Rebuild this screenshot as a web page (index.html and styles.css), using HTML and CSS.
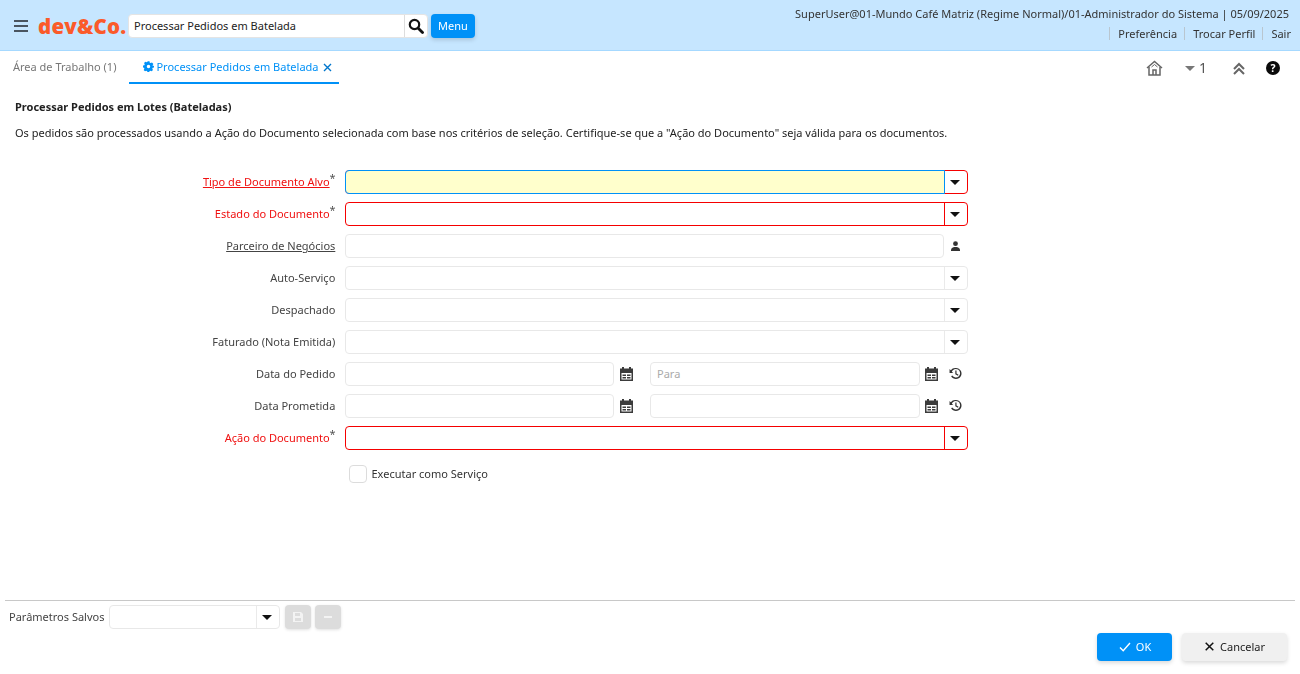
FILE: index.html
```html
<!DOCTYPE html>
<html lang="pt">
<head>
<meta charset="utf-8">
<title>Processar Pedidos em Batelada</title>
<link rel="stylesheet" href="styles.css">
</head>
<body>
<svg class="defs" width="0" height="0" aria-hidden="true">
  <symbol id="caret" viewBox="0 0 10 5"><path d="M0 0h10L5 5z"/></symbol>
  <symbol id="cal" viewBox="0 0 13 14"><path fill-rule="evenodd" d="M2 0h2v1.500h5V0h2v1.500h2V14H0V1.500h2zM1.500 6v6.500h10V6zM2.500 7.500h3.500v1.500H2.500zM7 7.500h3.500v1.500H7zM2.500 10h3.500v1.500H2.500zM7 10h3.500v1.500H7z"/></symbol>
  <symbol id="hist" viewBox="0 0 14 14"><path d="M7.500 1A6 6 0 1 1 2.300 10l1.200-.8A4.600 4.600 0 1 0 3 5.200l1.600 1.300H.6V2.200l1.300 1.400A6 6 0 0 1 7.500 1z"/><path d="M6.800 3.800h1.300v3.200l2.200 1.400-.7 1L6.800 7.700z"/></symbol>
</svg>

<header class="topbar">
  <div class="top-left">
    <svg class="burger" width="14" height="12" viewBox="0 0 14 12"><path d="M0 0h14v2H0zM0 5h14v2H0zM0 10h14v2H0z"/></svg>
    <span class="logo">dev&amp;Co.</span>
    <div class="search">
      <span class="search-text">Processar Pedidos em Batelada</span>
      <span class="search-btn"><svg width="16" height="16" viewBox="0 0 16 16"><circle cx="6.500" cy="6.500" r="4.700" fill="none" stroke="#111" stroke-width="2.200"/><path d="M10 10l4.500 4.500" stroke="#111" stroke-width="2.800" stroke-linecap="round"/></svg></span>
    </div>
    <button class="menu-btn">Menu</button>
  </div>
  <div class="top-right">
    <div class="user">SuperUser@01-Mundo Café Matriz (Regime Normal)/01-Administrador do Sistema | 05/09/2025</div>
    <nav class="links"><a>Preferência</a><a>Trocar Perfil</a><a>Sair</a></nav>
  </div>
</header>

<div class="tabbar">
  <div class="tabs">
    <span class="tab">Área de Trabalho (1)</span>
    <span class="tab active">
      <svg width="11" height="11" viewBox="0 0 12 12"><path fill="#0091f7" fill-rule="evenodd" d="M4.900.3h2.200l.3 1.500 1 .5L9.800 1.700l1.500 1.600-.8 1.300.4 1L12 5v2.100l-1.500.3-.4 1 .8 1.300-1.500 1.600-1.400-.7-1 .5-.3 1.400H4.900l-.3-1.400-1-.5-1.400.7L.7 9.700l.8-1.300-.4-1L0 7.100V5l1.500-.4.400-1-.8-1.300 1.500-1.600 1.400.6 1-.5zM6 4.200a1.900 1.900 0 1 0 0 3.800 1.900 1.900 0 0 0 0-3.800z"/></svg>
      Processar Pedidos em Batelada
      <svg class="tab-x" width="9" height="9" viewBox="0 0 9 9"><path d="M1 1l7 7M8 1L1 8" stroke="#0076cc" stroke-width="1.400"/></svg>
    </span>
  </div>
  <div class="tools">
    <svg width="17" height="16" viewBox="0 0 17 16" fill="none" stroke="#666" stroke-width="1.500"><path d="M1 8l7.500-6.500L16 8"/><path d="M3 7v8h11V7M7 15v-5h3v5"/><path d="M5.500 7l3-2.500 3 2.500" stroke-width="1"/></svg>
    <span class="tool-count"><svg width="10" height="5"><use href="#caret" fill="#777"/></svg>1</span>
    <svg width="14" height="13" viewBox="0 0 14 13" fill="none" stroke="#666" stroke-width="2"><path d="M2 7l5-5 5 5M2 12l5-5 5 5"/></svg>
    <svg class="help" width="14" height="14" viewBox="0 0 14 14"><circle cx="7" cy="7" r="7" fill="#0a0a0a"/><text x="7" y="10.700" text-anchor="middle" class="help-q">?</text></svg>
  </div>
</div>

<main class="content">
  <h1 class="title">Processar Pedidos em Lotes (Bateladas)</h1>
  <p class="desc">Os pedidos são processados usando a Ação do Documento selecionada com base nos critérios de seleção. Certifique-se que a "Ação do Documento" seja válida para os documentos.</p>

  <form class="form">
    <label class="lbl req"><u>Tipo de Documento Alvo</u><sup>*</sup></label>
    <div class="combo err focus"><span class="field"></span><span class="drop"><svg width="10" height="5"><use href="#caret"/></svg></span></div>

    <label class="lbl req">Estado do Documento<sup>*</sup></label>
    <div class="combo err"><span class="field"></span><span class="drop"><svg width="10" height="5"><use href="#caret"/></svg></span></div>

    <label class="lbl"><u>Parceiro de Negócios</u></label>
    <div class="search-field"><span class="box"></span><svg class="person" width="9" height="10" viewBox="0 0 9 10"><circle cx="4.500" cy="2.700" r="2.400"/><path d="M0 10V8.500Q.3 6.500 3 6h3q2.700.5 3 2.500V10z"/></svg></div>

    <label class="lbl">Auto-Serviço</label>
    <div class="combo"><span class="field"></span><span class="drop"><svg width="10" height="5"><use href="#caret"/></svg></span></div>

    <label class="lbl">Despachado</label>
    <div class="combo"><span class="field"></span><span class="drop"><svg width="10" height="5"><use href="#caret"/></svg></span></div>

    <label class="lbl">Faturado (Nota Emitida)</label>
    <div class="combo"><span class="field"></span><span class="drop"><svg width="10" height="5"><use href="#caret"/></svg></span></div>

    <label class="lbl">Data do Pedido</label>
    <div class="dates">
      <span class="box"></span>
      <svg class="ico-cal" width="13" height="14"><use href="#cal"/></svg>
      <span class="box ph">Para</span>
      <svg class="ico-cal second" width="13" height="14"><use href="#cal"/></svg>
      <svg class="ico-hist" width="13" height="13"><use href="#hist"/></svg>
    </div>

    <label class="lbl">Data Prometida</label>
    <div class="dates">
      <span class="box"></span>
      <svg class="ico-cal" width="13" height="14"><use href="#cal"/></svg>
      <span class="box"></span>
      <svg class="ico-cal second" width="13" height="14"><use href="#cal"/></svg>
      <svg class="ico-hist" width="13" height="13"><use href="#hist"/></svg>
    </div>

    <label class="lbl req">Ação do Documento<sup>*</sup></label>
    <div class="combo err"><span class="field"></span><span class="drop"><svg width="10" height="5"><use href="#caret"/></svg></span></div>

    <span></span>
    <div class="check"><span class="checkbox"></span>Executar como Serviço</div>
  </form>
</main>

<footer class="footer">
  <div class="saved">
    <span class="saved-lbl">Parâmetros Salvos</span>
    <div class="combo small"><span class="field"></span><span class="drop"><svg width="10" height="5"><use href="#caret"/></svg></span></div>
    <span class="grey-btn"><svg class="faint" width="10" height="10" viewBox="0 0 10 10"><path fill-rule="evenodd" d="M0 0h8l2 2v8H0zM2 1v3h5V1zM2 6v3h6V6z"/></svg></span>
    <span class="grey-btn"><svg class="faint" width="8" height="2"><path d="M0 0h8v2H0z"/></svg></span>
  </div>
  <div class="actions">
    <button class="btn ok"><svg width="12" height="10" viewBox="0 0 12 10" fill="none" stroke="#fff" stroke-width="1.400"><path d="M1 5.500L4.200 8.700 11 1"/></svg>OK</button>
    <button class="btn cancel"><svg width="9" height="9" viewBox="0 0 9 9" fill="none" stroke="#111" stroke-width="1.500"><path d="M.7.7l7.600 7.600M8.300.7L.7 8.300"/></svg>Cancelar</button>
  </div>
</footer>
</body>
</html>
```
FILE: styles.css
```css
* { box-sizing: border-box; }
html { height: 100%; background: #fff; }
body {
  height: 100%;
  margin: 0;
  color: #333;
  font: 11px/16px "Noto Sans", sans-serif;
  display: flex;
  flex-direction: column;
  overflow: hidden;
  will-change: opacity;
}
.defs { position: absolute; }

.topbar {
  height: 51px;
  flex: none;
  background: #c6e6ff;
  border-bottom: 1px solid #a6d9ff;
  display: flex;
  justify-content: space-between;
  padding: 0 10px 0 14px;
}
.top-left { display: flex; align-items: center; padding-top: 2px; height: 50px; }
.burger { fill: #4a5560; flex: none; }
.logo {
  margin-left: 10px;
  width: 90px;
  font: 800 20.500px/24px "Open Sans", "Noto Sans", sans-serif;
  color: #fb5a2a;
  letter-spacing: .2px;
  white-space: nowrap;
}
.search {
  width: 300px;
  height: 24px;
  background: #fff;
  border: 1px solid #e4e4e4;
  border-radius: 4px;
  display: flex;
  align-items: center;
  color: #222;
}
.search-text { flex: 1; padding-left: 5px; }
.search-btn {
  width: 23px;
  height: 22px;
  border-left: 1px solid #ddd;
  display: flex;
  align-items: center;
  justify-content: center;
}
.menu-btn {
  margin-left: 3px;
  width: 44px;
  height: 24px;
  padding: 0 0 1px;
  border: 0;
  border-radius: 4px;
  background: #0091f7;
  color: #fff;
  font: 11px "Noto Sans", sans-serif;
  box-shadow: 0 2px 4px rgba(0,0,0,.15);
}
.top-right { text-align: right; padding-top: 6px; color: #333; }
.user { height: 16px; margin-right: 1px; white-space: nowrap; }
.links { display: flex; justify-content: flex-end; margin: 5px -1px 0 0; height: 13px; line-height: 13px; }
.links a { border-left: 1px solid #b9c6d0; padding: 0 0 0 8px; margin-left: 7px; }

.tabbar {
  height: 33px;
  flex: none;
  display: flex;
  justify-content: space-between;
  padding-left: 13px;
}
.tabs { display: flex; }
.tab { color: #777; line-height: 32px; white-space: nowrap; }
.tab.active {
  margin-left: 13px;
  width: 210px;
  height: 33px;
  padding-left: 14px;
  color: #0091f7;
  border-bottom: 2px solid #0091f7;
  display: flex;
  align-items: center;
  gap: 2px;
}
.tab-x { margin-left: 2px; margin-top: 2px; }
.tools { display: flex; align-items: center; padding-right: 20px; padding-top: 1px; }
.tool-count {
  margin-left: 22px;
  width: 47px;
  font-size: 14px;
  color: #555;
  display: flex;
  align-items: center;
  gap: 4px;
}
.help { margin-left: 20px; }
.help-q { fill: #fff; font: 700 10.500px "Noto Sans", sans-serif; }

.content { flex: 1; padding: 15px 15px 0; min-height: 0; }
.title { margin: 0; font: 700 11px/16px "Noto Sans", sans-serif; color: #222; }
.desc { margin: 10px 0 0; color: #222; white-space: nowrap; }

.form {
  margin-top: 29px;
  display: grid;
  grid-template-columns: 321px 623px;
  grid-auto-rows: 24px;
  column-gap: 9px;
  row-gap: 8px;
}
.lbl {
  text-align: right;
  line-height: 24px;
  padding-right: .7px;
  color: #444;
  position: relative;
  white-space: nowrap;
}
.lbl.req { color: #f01010; padding-right: 6.400px; }
.lbl sup { color: #555; font-size: 11px; line-height: 0; position: absolute; top: 8px; vertical-align: baseline; }

.combo { display: flex; height: 24px; border: 1px solid #e8e8e8; border-radius: 4px; background: #fff; }
.combo .field { flex: 1; border-radius: 3px 0 0 3px; }
.combo .drop {
  width: 23px;
  padding-right: 2px;
  border-left: 1px solid #eaeaea;
  display: flex;
  align-items: center;
  justify-content: center;
  fill: #111;
}
.combo.err { border-color: #f50000; }
.combo.err .drop { border-left-color: #f50000; }
.combo.focus .field { background: #ffffcc; margin: -1px 0 -1px -1px; border: 1px solid #0091f7; border-radius: 4px 0 0 4px; }
.combo.focus .drop { border-left: 0; width: 22px; }

.box { height: 24px; border: 1px solid #e8e8e8; border-radius: 4px; background: #fff; display: block; }
.ph { color: #aaa; padding-left: 6px; line-height: 22px; }
.search-field { display: flex; align-items: center; }
.search-field .box { width: 599px; }
.person { fill: #333; margin-left: 7px; margin-top: -1px; }

.dates { display: grid; grid-template-columns: 269px 36px 270px 26px 16px; align-items: center; width: 617px; }
.ico-cal { fill: #3b3b3b; margin-left: 6px; margin-top: -1px; }
.ico-cal.second { margin-left: 5px; }
.ico-hist { fill: #333; margin-top: -1px; margin-left: 3px; }

.check { display: flex; align-items: center; gap: 4.500px; color: #333; padding-left: 4px; height: 32px; }
.checkbox { width: 18px; height: 18px; border: 1px solid #dcdcdc; border-radius: 4px; background: #fff; }

.footer {
  flex: none;
  height: 74px;
  margin: 0 5px;
  border-top: 1px solid #c8c8c8;
  padding-top: 4px;
}
.saved { display: flex; align-items: center; padding-left: 4px; }
.saved-lbl { width: 100px; color: #444; }
.combo.small { width: 171px; }
.grey-btn {
  width: 26px;
  height: 24px;
  margin-left: 4px;
  background: #dcdcdc;
  border-radius: 4px;
  display: flex;
  align-items: center;
  justify-content: center;
  box-shadow: 0 1px 3px rgba(0,0,0,.12);
}
.combo.small + .grey-btn { margin-left: 5px; }
.faint { fill: #f3f3f3; }
.actions { display: flex; justify-content: flex-end; gap: 10px; padding-right: 8px; margin-top: 4px; }
.btn {
  height: 28px;
  border: 0;
  padding: 0 0 1px;
  border-radius: 4px;
  font: 11px "Noto Sans", sans-serif;
  display: flex;
  align-items: center;
  justify-content: center;
  gap: 5px;
  box-shadow: 0 2px 4px rgba(0,0,0,.15);
}
.ok { width: 75px; background: #0091f7; color: #fff; padding-left: 1px; }
.cancel { width: 105px; background: #f0f0f0; color: #222; gap: 6px; padding-left: 1px; }
```
